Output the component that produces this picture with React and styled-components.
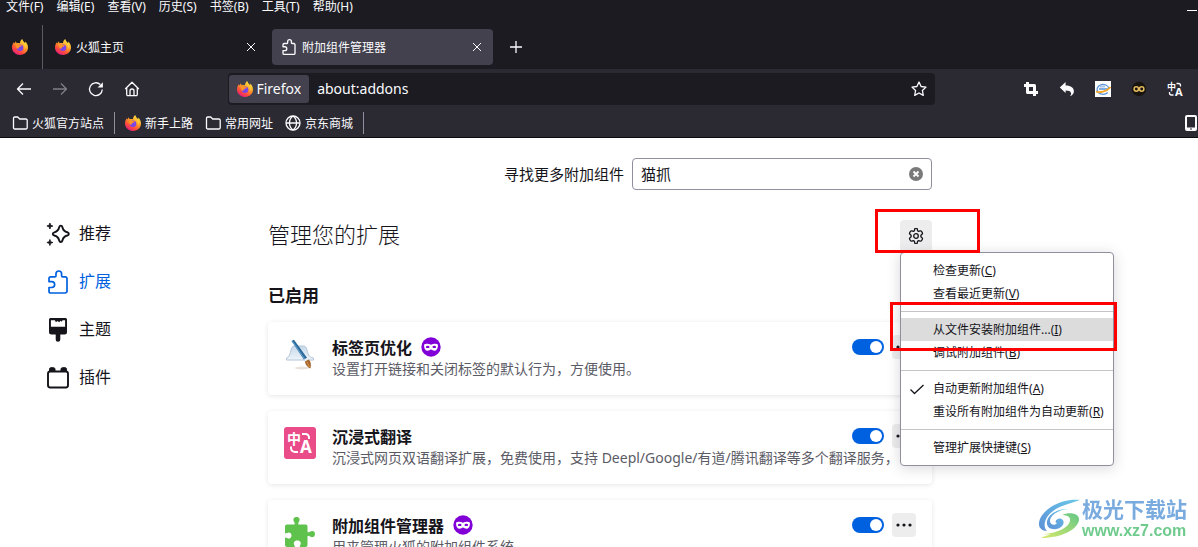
import React from "react";
import styled, { createGlobalStyle } from "styled-components";

const colors = {
  FRAME: "#1c1b22",
  TOOLBAR: "#2b2a33",
  TAB: "#42414d",
  LIGHT: "#fbfbfe",
  TEXT: "#15141a",
  MUTED: "#5b5b66",
  BLUE: "#0061e0",
  BUTTON: "#ededee",
  RED: "#ff0000",
};

const menus = [
  ["文件", "F"],
  ["编辑", "E"],
  ["查看", "V"],
  ["历史", "S"],
  ["书签", "B"],
  ["工具", "T"],
  ["帮助", "H"],
];

const addons = [
  {
    name: "标签页优化",
    text: "设置打开链接和关闭标签的默认行为，方便使用。",
    icon: <BrushHatIcon />,
    badge: true,
  },
  {
    name: "沉浸式翻译",
    text: "沉浸式网页双语翻译扩展，免费使用，支持 Deepl/Google/有道/腾讯翻译等多个翻译服务，",
    icon: <TranslateTileIcon />,
  },
  {
    name: "附加组件管理器",
    text: "用来管理火狐的附加组件系统",
    icon: <GreenPuzzleIcon />,
    badge: true,
  },
];

const menuGroups = [
  [
    { label: "检查更新", access: "C" },
    { label: "查看最近更新", access: "V" },
  ],
  [
    { label: "从文件安装附加组件...", access: "I", active: true },
    { label: "调试附加组件", access: "B" },
  ],
  [
    { label: "自动更新附加组件", access: "A", checked: true },
    { label: "重设所有附加组件为自动更新", access: "R" },
  ],
  [{ label: "管理扩展快捷键", access: "S" }],
];

export default function App() {
  return (
    <Window>
      <GlobalStyle />
      <MenuBar>
        {menus.map(([label, access]) => (
          <MenuBarItem key={access}>
            {label}({access})
          </MenuBarItem>
        ))}
        <Minimize aria-label="最小化" />
      </MenuBar>
      <TabBar>
        <PinnedTab aria-label="Firefox">
          <FirefoxIcon />
        </PinnedTab>
        <Tabs>
          <Tab>
            <FirefoxIcon />
            <TabTitle>火狐主页</TabTitle>
            <CloseButton aria-label="关闭">
              <CloseIcon />
            </CloseButton>
          </Tab>
          <Tab $selected>
            <PuzzleIcon size={16} />
            <TabTitle>附加组件管理器</TabTitle>
            <CloseButton aria-label="关闭">
              <CloseIcon />
            </CloseButton>
          </Tab>
          <ToolButton aria-label="新建标签页">
            <Icon16>
              <path d="M8 2v12M2 8h12" />
            </Icon16>
          </ToolButton>
        </Tabs>
      </TabBar>
      <Toolbar>
        <NavRow>
          <ToolButton aria-label="后退">
            <Icon16>
              <path d="M15 8H1.5M7 2.5L1.5 8 7 13.5" />
            </Icon16>
          </ToolButton>
          <ToolButton aria-label="前进" disabled>
            <Icon16>
              <path d="M1 8h13.500M9 2.500L14.500 8 9 13.500" />
            </Icon16>
          </ToolButton>
          <ToolButton aria-label="刷新">
            <Icon16>
              <path d="M14.300 8.500A6.400 6.400 0 1 1 12.300 3.500" />
              <path d="M14.900 1.200v5.300H9.600z" fill="currentColor" stroke="none" />
            </Icon16>
          </ToolButton>
          <ToolButton aria-label="主页">
            <Icon16>
              <path d="M1.200 8L8 1.300 14.800 8M2.700 7v6.500a1.200 1.200 0 0 0 1.200 1.200h8.200a1.200 1.200 0 0 0 1.200-1.200V7" />
              <path d="M6 14.500V10a2 2 0 0 1 4 0v4.500" />
            </Icon16>
          </ToolButton>
          <Spacer />
          <UrlBar>
            <Identity>
              <FirefoxIcon />
              <Label>Firefox</Label>
            </Identity>
            <UrlInput aria-label="地址" defaultValue="about:addons" />
            <ToolButton aria-label="添加书签" $narrow>
              <Icon16>
                <path d="M8 1l2.100 4.500 4.900.6-3.600 3.400.9 4.900L8 12l-4.300 2.400.9-4.900L1 6.100l4.900-.6z" />
              </Icon16>
            </ToolButton>
          </UrlBar>
          <Spacer />
          <ToolButton aria-label="截图">
            <Icon16>
              <path d="M1 4.500h10.500V15M4.500 1v10.500H15" strokeWidth="3" />
            </Icon16>
          </ToolButton>
          <ToolButton aria-label="撤销">
            <Icon16>
              <path
                d="M.8 6.600L6.600 1v3.400c5.600 0 8.300 2.600 8.300 5.800 0 2.500-1.500 4.100-4 5 1.200-1.300 1.400-2.200 1.100-3.200-.5-1.800-2.300-2.500-5.400-2.500V12z"
                fill="currentColor"
                stroke="none"
              />
            </Icon16>
          </ToolButton>
          <ToolButton aria-label="IE">
            <Icon16>
              <path d="M0 0h16v16H0z" fill="#fff" stroke="none" />
              <path d="M14 7.500A6 5 0 1 0 12.800 11.500M4 8h9" stroke="#5a93d8" />
              <path d="M5 5.500h5" stroke="#a9c4e6" strokeWidth="2" />
              <path d="M1 10.500c3 1.500 11 .5 14.500-4.500" stroke="#f6a623" strokeWidth="1.800" />
            </Icon16>
          </ToolButton>
          <ToolButton aria-label="Infinity">
            <Icon16>
              <circle cx="8" cy="8" r="7.200" fill="#17140f" stroke="none" />
              <circle cx="5.300" cy="8" r="2.200" stroke="#e6bc60" strokeWidth="1.500" />
              <circle cx="10.700" cy="8" r="2.200" stroke="#e6bc60" strokeWidth="1.500" />
            </Icon16>
          </ToolButton>
          <ToolButton aria-label="翻译">
            <Icon16>
              <SvgText x="0" y="9" fontSize="9">中</SvgText>
              <SvgText x="8" y="15" fontSize="11">A</SvgText>
              <path d="M9.500 2.500h2a2 2 0 0 1 2 2v1M2.500 11v1a2 2 0 0 0 2 2h2" />
            </Icon16>
          </ToolButton>
        </NavRow>
        <BookmarkRow>
          <Bookmark href="#official">
            <FolderIcon />
            火狐官方站点
          </Bookmark>
          <Divider />
          <Bookmark href="#start">
            <FirefoxIcon />
            新手上路
          </Bookmark>
          <Bookmark href="#common">
            <FolderIcon />
            常用网址
          </Bookmark>
          <Bookmark href="#jd">
            <Icon16>
              <circle cx="8" cy="8" r="7" />
              <path d="M1 8h14M8 1c-4.700 3.500-4.700 10.500 0 14M8 1c4.700 3.500 4.700 10.500 0 14" />
            </Icon16>
            京东商城
          </Bookmark>
          <Divider />
          <MobileButton aria-label="移动设备书签">
            <svg width="12" height="16" viewBox="0 0 12 16" fill="none" stroke="currentColor">
              <rect x="1" y="1" width="10" height="14" rx="1" strokeWidth="2" />
              <path d="M1 13.500h10" strokeWidth="2" />
              <path d="M5 14h2" stroke={colors.TOOLBAR} />
            </svg>
          </MobileButton>
        </BookmarkRow>
      </Toolbar>
      <Page>
        <Sidebar>
          <Category href="#discover">
            <SparkleIcon />
            <CategoryName>推荐</CategoryName>
          </Category>
          <Category href="#extension" $selected>
            <PuzzleIcon size={24} />
            <CategoryName>扩展</CategoryName>
          </Category>
          <Category href="#theme">
            <ThemeIcon />
            <CategoryName>主题</CategoryName>
          </Category>
          <Category href="#plugin">
            <PluginIcon />
            <CategoryName>插件</CategoryName>
          </Category>
        </Sidebar>
        <Main>
          <SearchRow>
            <Label as="label" htmlFor="search-addons">
              寻找更多附加组件
            </Label>
            <SearchBox>
              <SearchInput id="search-addons" type="text" defaultValue="猫抓" />
              <ClearButton aria-label="清除">
                <svg width="14" height="14" viewBox="0 0 14 14">
                  <circle cx="7" cy="7" r="7" fill="#7a7a7a" />
                  <path d="M4.500 4.500l5 5M9.500 4.500l-5 5" stroke="#fff" strokeWidth="1.800" />
                </svg>
              </ClearButton>
            </SearchBox>
          </SearchRow>
          <HeaderRow>
            <Heading>管理您的扩展</Heading>
            <Options>
              <GearButton aria-label="附加组件工具">
                <GearIcon />
              </GearButton>
              <OptionsMenu />
              <Highlight $left={-25} $top={-11} $width={105} $height={44} />
              <Highlight $left={-10} $top={82} $width={227} $height={49} />
            </Options>
          </HeaderRow>
          <Subheading>已启用</Subheading>
          <List>
            {addons.map((addon) => (
              <AddonCard key={addon.name} {...addon} />
            ))}
          </List>
        </Main>
      </Page>
      <Watermark>
        <SwirlIcon />
        <div>
          <WatermarkName>极光下载站</WatermarkName>
          <WatermarkUrl>www.xz7.com</WatermarkUrl>
        </div>
      </Watermark>
    </Window>
  );
}

function AddonCard({ name, text, icon, badge }) {
  return (
    <Card>
      <CardIcon>{icon}</CardIcon>
      <CardInfo>
        <CardTitle>
          {name}
          {badge && <PrivateIcon />}
        </CardTitle>
        <CardText>{text}</CardText>
      </CardInfo>
      <CardActions>
        <Toggle type="checkbox" aria-label={`启用 ${name}`} defaultChecked />
        <MoreButton aria-label="更多选项">
          <svg width="16" height="16" viewBox="0 0 16 16" fill="currentColor">
            <circle cx="2" cy="8" r="1.600" />
            <circle cx="8" cy="8" r="1.600" />
            <circle cx="14" cy="8" r="1.600" />
          </svg>
        </MoreButton>
      </CardActions>
    </Card>
  );
}

function OptionsMenu() {
  return (
    <Menu>
      {menuGroups.map((group, index) => (
        <React.Fragment key={index}>
          {index > 0 && <MenuSeparator />}
          {group.map((item) => (
            <MenuItem key={item.access} $active={item.active}>
              <MenuCheck>
                {item.checked && (
                  <Icon16>
                    <path d="M1.500 8.500L5.500 12.500 14.500 4" />
                  </Icon16>
                )}
              </MenuCheck>
              <Label>
                {item.label}(<u>{item.access}</u>)
              </Label>
            </MenuItem>
          ))}
        </React.Fragment>
      ))}
    </Menu>
  );
}

function Icon16({ children }) {
  return (
    <svg
      width="16"
      height="16"
      viewBox="0 0 16 16"
      fill="none"
      stroke="currentColor"
      strokeWidth="1.300"
      strokeLinejoin="round"
    >
      {children}
    </svg>
  );
}

function FirefoxIcon() {
  return (
    <svg width="16" height="16" viewBox="0 0 16 16">
      <defs>
        <linearGradient id="fox-body" x1="0.8" y1="0.1" x2="0.25" y2="1">
          <stop offset="0" stopColor="#ffe23d" />
          <stop offset="0.4" stopColor="#ff9a28" />
          <stop offset="0.7" stopColor="#ff4b3a" />
          <stop offset="1" stopColor="#e3168a" />
        </linearGradient>
      </defs>
      <path
        d="M10.300 0c.4 2 1.500 2.800 2.600 3.900.5-.1.400-.8.300-1.300C15 4 16 6.200 16 8.600 16 12.900 12.400 16 8.100 16S0 12.800 0 8.500c0-2.400.8-3.900 1.900-5.300L2.500 4.500 3.800 2.300l.8 2C5.600 3.900 7 4 8 4.300 8 2.500 9 .9 10.300 0z"
        fill="url(#fox-body)"
      />
      <circle cx="8" cy="8.800" r="3.300" fill="#7b45e8" />
      <path d="M3.500 5.300c1.500-.8 3.200-.3 4.500.8l2 .3c-.5 1-1.900 1.200-2.800 1.700-.7.500-.2 1.500-1.200 1.700C4.500 10 3.400 7.500 3.500 5.300z" fill="#ff9327" />
      <path d="M10 3c2.300 1.600 3.500 4 2.700 7 1-1 1.400-2.500 1-4z" fill="#fff04d" opacity="0.6" />
    </svg>
  );
}

function CloseIcon() {
  return (
    <svg width="10" height="10" viewBox="0 0 10 10" stroke="currentColor">
      <path d="M1 1l8 8M9 1L1 9" />
    </svg>
  );
}

function FolderIcon() {
  return (
    <Icon16>
      <path d="M1.500 3.200A1.200 1.200 0 0 1 2.700 2h3l2 2h6.300A1.200 1.200 0 0 1 15.200 5.200v7.600a1.200 1.200 0 0 1-1.200 1.200H2.700A1.200 1.200 0 0 1 1.500 12.800z" />
    </Icon16>
  );
}

function PuzzleIcon({ size }) {
  return (
    <svg
      width={size}
      height={size}
      viewBox="0 0 24 24"
      fill="none"
      stroke="currentColor"
      strokeWidth={size === 16 ? 2 : 1.7}
      strokeLinejoin="round"
    >
      <path d="M3 11.600V8.600A1.800 1.800 0 0 1 4.800 6.800H9a1 1 0 0 0 1-1V3.800a2.800 2.800 0 0 1 5.600 0v2a1 1 0 0 0 1 1h2.600A1.800 1.800 0 0 1 21 8.600v12.600a1.800 1.800 0 0 1-1.800 1.800H4.800A1.800 1.800 0 0 1 3 21.200V17.500h2.700a2.950 2.950 0 0 0 0-5.900z" />
    </svg>
  );
}

function SparkleIcon() {
  return (
    <svg width="24" height="24" viewBox="0 0 24 24" fill="none" stroke="currentColor">
      <path
        d="M14.800 3.600c.9 0 1.400.8 1.600 1.700.7 3 1.900 4.300 4.900 5 2 .5 2 2.700 0 3.200-3 .7-4.200 2-4.900 5-.5 2-2.700 2-3.200 0-.7-3-1.900-4.300-4.900-5-2-.5-2-2.700 0-3.200 3-.7 4.200-2 4.900-5 .2-.9.700-1.700 1.600-1.700z"
        strokeWidth="1.900"
      />
      <path
        d="M3.900 1l.8 2.200 2.200.8-2.200.8-.8 2.200-.8-2.200L.9 4l2.200-.8zM3.900 17.500l.8 2.200 2.200.8-2.200.8-.8 2.200-.8-2.200-2.200-.8 2.200-.8z"
        fill="currentColor"
        strokeWidth="0.800"
      />
    </svg>
  );
}

function ThemeIcon() {
  return (
    <svg width="24" height="24" viewBox="0 0 24 24" fill="currentColor">
      <path d="M4.500 0h15A1.500 1.500 0 0 1 21 1.500V14a2.500 2.500 0 0 1-2.500 2.500H14.300v5a2.300 2.300 0 0 1-4.600 0v-5H5.500A2.500 2.500 0 0 1 3 14V1.500A1.500 1.500 0 0 1 4.500 0zM4.900 2.200v6.600h14.200V2.200h-2.500l-1 1.500-1-1-1.500 1.500-1.600-1.200-1.600 1.200-1-2z" fillRule="evenodd" />
    </svg>
  );
}

function PluginIcon() {
  return (
    <svg width="24" height="24" viewBox="0 0 24 24" fill="none" stroke="currentColor">
      <rect x="2" y="5.500" width="20" height="16" rx="2.200" strokeWidth="1.900" />
      <path d="M3.500 5V3.200a1.500 1.500 0 0 1 1.500-1.500h2.500A1.500 1.500 0 0 1 9 3.200V5zM15 5V3.200a1.500 1.500 0 0 1 1.500-1.500H19a1.500 1.500 0 0 1 1.500 1.500V5z" fill="currentColor" />
    </svg>
  );
}

function GearIcon() {
  return (
    <Icon16>
      <path d="M6.700 1.400a1.300 1.300 0 0 1 2.600 0l.3 1.400 1 .6 1.500-.5a1.300 1.300 0 0 1 1.500.6l.7 1.200a1.300 1.300 0 0 1-.3 1.600l-1.100 1v1.400l1.100 1a1.300 1.300 0 0 1 .3 1.600l-.7 1.200a1.300 1.300 0 0 1-1.500.6l-1.500-.5-1 .6-.3 1.400a1.300 1.300 0 0 1-2.600 0l-.3-1.400-1-.6-1.500.5a1.300 1.300 0 0 1-1.500-.6l-.7-1.200a1.300 1.300 0 0 1 .3-1.600l1.100-1V7.300l-1.100-1a1.300 1.300 0 0 1-.3-1.600l.7-1.200a1.300 1.300 0 0 1 1.500-.6l1.500.5 1-.6z" />
      <circle cx="8" cy="8" r="2.300" />
    </Icon16>
  );
}

function PrivateIcon() {
  return (
    <svg width="20" height="20" viewBox="0 0 20 20">
      <circle cx="10" cy="10" r="9.700" fill="#8000d7" />
      <path
        d="M3 7.800C4.500 6.400 7.500 6.300 10 7.700c2.500-1.400 5.500-1.300 7 .1 0 4-1.400 6-3.600 6-1.500 0-2.200-1.300-3.400-1.300s-1.900 1.300-3.400 1.300C4.400 13.800 3 11.800 3 7.800z"
        fill="#fff"
      />
      <ellipse cx="6.700" cy="9.900" rx="1.800" ry="1.200" fill="#8000d7" />
      <ellipse cx="13.300" cy="9.900" rx="1.800" ry="1.200" fill="#8000d7" />
    </svg>
  );
}

function BrushHatIcon() {
  return (
    <svg width="32" height="32" viewBox="0 0 32 32">
      <defs>
        <linearGradient id="hat" x1="0" y1="0" x2="0" y2="1">
          <stop offset="0" stopColor="#c8d9ea" />
          <stop offset="1" stopColor="#eef4fa" />
        </linearGradient>
      </defs>
      <path
        d="M2.500 22v-2c3-1 3.500-4 4.500-8 .6-2.500 1.500-4 3.500-4h9c2 0 2.900 1.500 3.500 4 1 4 1.500 7 6.500 8v2z"
        fill="url(#hat)"
        stroke="#b4c6d8"
      />
      <ellipse cx="18" cy="30" rx="7" ry="1.500" fill="#e7e2dc" />
      <path d="M7.500 3l13 19.500 3-2L10 1.800z" fill="#2c6a9c" />
      <path d="M8.500 3.500l12.500 18" stroke="#69a6cf" />
      <path d="M20 21.500l3.500-2 1.800 3-3.500 2z" fill="#e8edf1" />
      <path d="M21 23.500l3.700-2c2 1.500 2.700 4.500 1.800 9-3-1.200-5.200-3.500-5.500-7z" fill="#a5652d" />
      <path d="M23 24l2.500 5" stroke="#d8974f" />
    </svg>
  );
}

function TranslateTileIcon() {
  return (
    <svg width="32" height="32" viewBox="0 0 32 32" fill="none" stroke="#fff">
      <rect width="32" height="32" rx="3" fill="#ea4c89" stroke="none" />
      <SvgText x="3" y="17" fontSize="14" $light>中</SvgText>
      <SvgText x="16" y="26" fontSize="17" $light>A</SvgText>
      <path d="M18 7h3.500A3.500 3.500 0 0 1 25 10.500V12M7 19.500V21a4 4 0 0 0 4 4h3" strokeWidth="2" />
    </svg>
  );
}

function GreenPuzzleIcon() {
  return (
    <svg width="32" height="32" viewBox="0 0 32 32">
      <path
        d="M1 10.500A2 2 0 0 1 3 8.500h7c1.300 0 .9-1.300.3-2.200C8.500 3.500 9.500 1 12.500 1s4 2.500 2.200 5.300c-.6.900-1 2.200.3 2.200h6.500a2 2 0 0 1 2 2v5c0 1.300 1.300.9 2.200.3C28.500 14 31 15 31 18s-2.500 4-5.300 2.200c-.9-.6-2.200-1-2.200.3V29a2 2 0 0 1-2 2h-4.800c-1.300 0-1-1.200-.4-2.100 1.200-1.900.3-4.400-3-4.400s-4.200 2.500-3 4.400c.6.900.9 2.100-.4 2.100H3a2 2 0 0 1-2-2v-6.500c0-1.300 1.200-1 2.100-.4 1.900 1.200 4.400.3 4.400-2.600s-2.500-3.800-4.400-2.600C2.200 17.500 1 17.800 1 16.500z"
        fill="#5fc24c"
      />
    </svg>
  );
}

function SwirlIcon() {
  return (
    <svg width="42" height="40" viewBox="0 0 42 40" fill="none">
      <defs>
        <linearGradient id="swirl-blue" x1="1" y1="0" x2="0" y2="1">
          <stop offset="0" stopColor="#69c8ea" />
          <stop offset="1" stopColor="#5d8fd6" />
        </linearGradient>
        <linearGradient id="swirl-green" x1="1" y1="0" x2="0" y2="1">
          <stop offset="0" stopColor="#62c886" />
          <stop offset="1" stopColor="#d8e86a" />
        </linearGradient>
      </defs>
      <path d="M42 1C24-1 3 10 1 24c-.6 5 3 8 8 8C3 26 8 12 27 6 32 4 37 3 42 1z" fill="url(#swirl-blue)" />
      <path d="M30 10C16 10 8 18 9 25c1 6 10 7 15 2 4-4 0-9-4-7-3 1-3 4-1 4-2 3-7 2-7-2 0-5 7-11 18-12z" fill="url(#swirl-blue)" />
      <path d="M24 16c8-4 18-1 17 5C40 30 24 39 3 39c3-2 7-2 9-4-2 0-4 1-6 0 14-1 25-7 26-13 1-4-3-6-8-6z" fill="url(#swirl-green)" />
    </svg>
  );
}

const GlobalStyle = createGlobalStyle`
  * {
    box-sizing: border-box;
  }
  body {
    margin: 0;
    overflow: hidden;
    font-family: "Noto Sans", "Noto Sans CJK SC", sans-serif;
    font-size: 12px;
  }
  button,
  input {
    border: none;
    padding: 0;
    background: none;
    color: inherit;
    font: inherit;
  }
  a {
    color: inherit;
    text-decoration: none;
  }
  svg {
    display: block;
    flex: none;
  }
`;

const Window = styled.div`
  display: flex;
  flex-direction: column;
  height: 100vh;
  background: white;
  color: ${colors.TEXT};
`;

const MenuBar = styled.nav`
  display: flex;
  align-items: flex-start;
  gap: 1px;
  height: 25px;
  flex: none;
  background: ${colors.FRAME};
  color: ${colors.LIGHT};
`;

const MenuBarItem = styled.button`
  padding: 0 6px;
  line-height: 14px;
`;

const Minimize = styled.button`
  width: 10px;
  height: 11px;
  margin: 0 1px 0 auto;
  border-bottom: 1px solid ${colors.LIGHT};
`;

const TabBar = styled.div`
  display: flex;
  height: 44px;
  flex: none;
  background: ${colors.FRAME};
  color: ${colors.LIGHT};
`;

const PinnedTab = styled.button`
  padding: 0 14px 0 12px;
  border-right: 1px solid #5b5b66;
`;

const Tabs = styled.div`
  display: flex;
  flex: 1;
  align-items: center;
  gap: 5px;
  padding-left: 3px;
`;

const Tab = styled.div`
  display: flex;
  align-items: center;
  gap: 5px;
  width: 221px;
  height: 36px;
  padding: 0 11px 0 9px;
  border-radius: 4px;
  background: ${(props) => (props.$selected ? colors.TAB : "transparent")};
`;

const TabTitle = styled.span`
  flex: 1;
`;

const CloseButton = styled.button`
  display: flex;
`;

const ToolButton = styled.button`
  display: flex;
  align-items: center;
  justify-content: center;
  width: ${(props) => (props.$narrow ? 32 : 36)}px;
  height: 32px;
  flex: none;
  opacity: ${(props) => (props.disabled ? 0.4 : 1)};
`;

const Toolbar = styled.div`
  flex: none;
  border-bottom: 1px solid #0c0c0d;
  background: ${colors.TOOLBAR};
  color: ${colors.LIGHT};
`;

const NavRow = styled.div`
  display: flex;
  align-items: center;
  height: 40px;
  padding: 0 5px 0 6px;
`;

const Spacer = styled.div`
  flex: 1;
`;

const UrlBar = styled.div`
  display: flex;
  align-items: center;
  flex: 9;
  height: 32px;
  border-radius: 4px;
  background: ${colors.FRAME};
`;

const Label = styled.span`
  padding-bottom: 2px;
`;

const Identity = styled.button`
  display: flex;
  align-items: center;
  gap: 3px;
  height: 28px;
  margin-left: 1px;
  padding: 0 8px;
  border-radius: 3px;
  background: ${colors.TAB};
  font-size: 14px;
`;

const UrlInput = styled.input`
  flex: 1;
  min-width: 0;
  padding: 0 0 2px 8px;
  font-size: 14px;
`;

const BookmarkRow = styled.div`
  display: flex;
  align-items: center;
  height: 28px;
  padding: 0 1px 0 6px;
`;

const Bookmark = styled.a`
  display: flex;
  align-items: center;
  gap: 4px;
  padding: 0 6px;
  white-space: nowrap;
`;

const Divider = styled.span`
  width: 1px;
  height: 22px;
  margin: 0 4px;
  background: #8f8f9d;
`;

const MobileButton = styled.button`
  margin-left: auto;
`;

const Page = styled.div`
  display: flex;
  flex: 1;
  min-height: 0;
`;

const Sidebar = styled.nav`
  width: 268px;
  flex: none;
  padding: 72px 0 0 46px;
`;

const Category = styled.a`
  display: flex;
  align-items: center;
  gap: 9px;
  height: 48px;
  color: ${(props) => (props.$selected ? colors.BLUE : "inherit")};
  font-size: 16px;
`;

const CategoryName = styled.span`
  padding-bottom: 4px;
`;

const Main = styled.main`
  flex: 1;
  max-width: 664px;
  padding-top: 20px;
`;

const SearchRow = styled.div`
  display: flex;
  align-items: center;
  justify-content: flex-end;
  gap: 8px;
  font-size: 15px;
`;

const SearchBox = styled.div`
  display: flex;
  align-items: center;
  width: 300px;
  height: 32px;
  padding: 0 8px;
  border: 1px solid #8f8f9d;
  border-radius: 4px;
`;

const SearchInput = styled.input`
  flex: 1;
  min-width: 0;
  padding-bottom: 2px;
`;

const ClearButton = styled.button`
  display: flex;
`;

const HeaderRow = styled.div`
  display: flex;
  align-items: center;
  justify-content: space-between;
  margin-top: 30px;
`;

const Heading = styled.h1`
  margin: 0;
  padding-bottom: 4px;
  font-size: 22px;
  font-weight: 300;
  line-height: 28px;
`;

const Options = styled.div`
  position: relative;
`;

const GearButton = styled.button`
  display: flex;
  align-items: center;
  justify-content: center;
  width: 32px;
  height: 32px;
  border-radius: 4px;
  background: ${colors.BUTTON};
`;

const Menu = styled.div`
  position: absolute;
  top: 100%;
  left: 0;
  z-index: 1;
  width: 214px;
  padding: 6px 0;
  border: 1px solid #8f8f9d;
  border-radius: 4px;
  background: white;
  box-shadow: 0 2px 14px rgba(58, 57, 68, 0.2);
`;

const MenuItem = styled.button`
  display: flex;
  align-items: center;
  gap: 8px;
  width: 100%;
  height: 23px;
  padding-left: 8px;
  background: ${(props) => (props.$active ? "#dcdcdc" : "transparent")};
  white-space: nowrap;
`;

const MenuCheck = styled.span`
  width: 16px;
`;

const MenuSeparator = styled.div`
  height: 1px;
  margin: 6px 0;
  background: #c4c4c8;
`;

const Highlight = styled.div`
  position: absolute;
  top: ${(props) => props.$top}px;
  left: ${(props) => props.$left}px;
  z-index: 2;
  width: ${(props) => props.$width}px;
  height: ${(props) => props.$height}px;
  border: 3px solid ${colors.RED};
  pointer-events: none;
`;

const Subheading = styled.h2`
  margin: 32px 0 14px;
  font-size: 17px;
  font-weight: 700;
  line-height: 24px;
`;

const List = styled.div`
  display: flex;
  flex-direction: column;
  gap: 16px;
`;

const Card = styled.article`
  display: flex;
  padding: 13px 16px 16px;
  border-radius: 4px;
  background: white;
  box-shadow: 0 1px 5px rgba(12, 12, 13, 0.1);
`;

const CardIcon = styled.div`
  padding: 3px 16px 0 0;
`;

const CardInfo = styled.div`
  flex: 1;
  width: 0;
  padding-top: 3px;
`;

const CardTitle = styled.h3`
  display: flex;
  align-items: center;
  gap: 9px;
  height: 20px;
  margin: 0;
  padding-bottom: 2px;
  font-size: 16px;
  font-weight: 600;
`;

const CardText = styled.p`
  margin: 0;
  color: ${colors.MUTED};
  font-size: 14px;
  line-height: 21px;
  white-space: nowrap;
`;

const CardActions = styled.div`
  display: flex;
  align-items: center;
  gap: 8px;
  height: 24px;
`;

const Toggle = styled.input`
  display: flex;
  align-items: center;
  justify-content: flex-end;
  width: 32px;
  height: 16px;
  margin: 0;
  padding: 0 2px;
  border-radius: 8px;
  background: ${colors.BLUE};
  appearance: none;

  &::before {
    width: 12px;
    height: 12px;
    border-radius: 50%;
    background: white;
    content: "";
  }

  &:not(:checked) {
    justify-content: flex-start;
    background: #8f8f9d;
  }
`;

const MoreButton = styled.button`
  display: flex;
  align-items: center;
  justify-content: center;
  width: 24px;
  height: 24px;
  border-radius: 4px;
  background: ${colors.BUTTON};
`;

const Watermark = styled.div`
  position: fixed;
  right: 11px;
  bottom: 6px;
  display: flex;
  align-items: center;
  gap: 2px;
  font-weight: 700;
`;

const WatermarkName = styled.div`
  color: #7aabdf;
  font-size: 21px;
  line-height: 24px;
`;

const WatermarkUrl = styled.div`
  color: #6fcb8d;
  font-family: "Liberation Sans", sans-serif;
  font-size: 16px;
  line-height: 20px;
`;

const SvgText = styled.text`
  fill: ${(props) => (props.$light ? "white" : "currentColor")};
  stroke: none;
  font-family: "Noto Sans", "Noto Sans CJK SC", sans-serif;
  font-weight: 700;
`;
